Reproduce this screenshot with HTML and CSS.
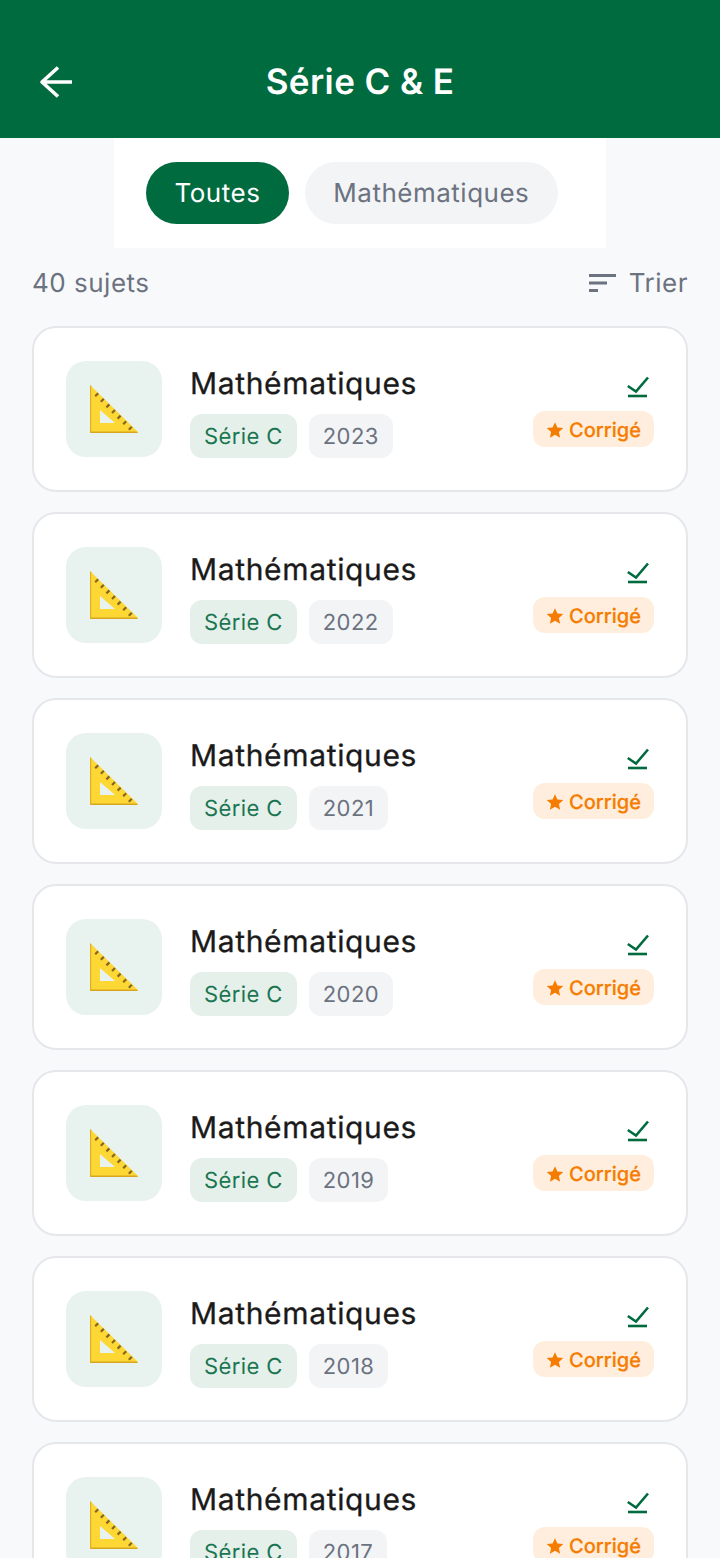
FILE: index.html
```html
<!DOCTYPE html>
<html lang="fr">
<head>
    <meta charset="UTF-8">
    <meta name="viewport" content="width=device-width, initial-scale=1.0">
    <title>Série C &amp; E</title>
    <link rel="stylesheet" href="styles.css">
</head>
<body>
    <svg class="sprites" width="0" height="0">
        <symbol id="ruler" viewBox="0 0 48 48">
            <path d="M0 0 L48 47 L48 48 L0 48 Z" fill="#fdd835"/>
            <path d="M0 46.5 H46.5 L48 48 H0 Z" fill="#d9a520"/>
            <path d="M0 0 L1.2 1.2 V48 H0 Z" fill="#e0ae22"/>
            <path d="M10 25 L25 38 H10 Z" fill="#e8f2ee"/>
            <path d="M5.2 11.2 L8.2 8.2 M10.8 16.8 L13.8 13.8 M16.4 22.4 L19.4 19.4 M22 28 L25 25 M27.6 33.6 L30.6 30.6 M33.2 39.2 L36.2 36.2 M38.8 44.8 L41.8 41.8" stroke="#86651f" stroke-width="2.2" fill="none"/>
        </symbol>
        <symbol id="done" viewBox="0 0 22 22">
            <path d="M0.8 10 L9 15.5 L21 1.5" stroke="#006b3f" stroke-width="2.6" fill="none"/>
            <path d="M1 20 H20" stroke="#006b3f" stroke-width="2.6" fill="none"/>
        </symbol>
        <symbol id="star" viewBox="0 0 24 24">
            <path d="M12 1.5 L15.2 8.6 L23 9.4 L17.2 14.6 L18.8 22.3 L12 18.4 L5.2 22.3 L6.8 14.6 L1 9.4 L8.8 8.6 Z" fill="#f57c00"/>
        </symbol>
    </svg>

    <header class="app-bar">
        <svg class="back" width="36" height="32" viewBox="0 0 36 32">
            <path d="M34 16 H4 M20 1.5 L4 16 L20 30.5" stroke="#fff" stroke-width="3.6" stroke-linejoin="round" fill="none"/>
        </svg>
        <h1>Série C &amp; E</h1>
    </header>

    <nav class="filters">
        <button class="chip chip-active">Toutes</button>
        <button class="chip">Mathématiques</button>
    </nav>

    <div class="toolbar">
        <span>40 sujets</span>
        <span class="sort">
            <svg width="27" height="18" viewBox="0 0 27 18">
                <path d="M0 1.5 H27 M0 9 H18 M0 16.5 H9" stroke="#6b7280" stroke-width="3" fill="none"/>
            </svg>
            Trier
        </span>
    </div>

    <main class="list" id="list"></main>

    <script>
        const years = [2023, 2022, 2021, 2020, 2019, 2018, 2017];
        const list = document.getElementById('list');

        years.forEach(year => {
            const card = document.createElement('article');
            card.className = 'card';
            card.innerHTML = `
                <div class="thumb"><svg width="48" height="48"><use href="#ruler"/></svg></div>
                <div class="info">
                    <h2>Mathématiques</h2>
                    <div class="tags">
                        <span class="tag tag-serie">Série C</span>
                        <span class="tag tag-year">${year}</span>
                    </div>
                </div>
                <div class="status">
                    <svg class="done" width="22" height="22"><use href="#done"/></svg>
                    <span class="badge"><svg width="18" height="18"><use href="#star"/></svg>Corrigé</span>
                </div>`;
            list.appendChild(card);
        });
    </script>
</body>
</html>
```

FILE: styles.css
```css
html, body {
    height: 1558px;
    overflow: hidden;
}

body {
    margin: 0;
    font-family: Inter, "Noto Sans", sans-serif;
    text-rendering: geometricPrecision;
    background-color: #f8f9fb;
    color: #1a1a1a;
}

.sprites {
    display: block;
    height: 0;
}

.app-bar {
    position: relative;
    height: 138px;
    background: #006b3f;
    display: flex;
    align-items: center;
    justify-content: center;
    padding-top: 26px;
    box-sizing: border-box;
}

.app-bar h1 {
    margin: 0;
    font-size: 35px;
    font-weight: 600;
    letter-spacing: 0.4px;
    color: #fff;
}

.back {
    position: absolute;
    left: 38px;
    top: 66px;
}

.filters {
    width: 492px;
    height: 110px;
    margin: 0 auto;
    background: #fff;
    box-sizing: border-box;
    padding: 24px 32px;
    display: flex;
    gap: 16px;
}

.chip {
    height: 62px;
    padding: 0 28.5px;
    border: none;
    border-radius: 31px;
    font-family: inherit;
    font-size: 26px;
    font-weight: 400;
    letter-spacing: 0.5px;
    text-rendering: geometricPrecision;
    background: #f3f4f6;
    color: #6b7280;
}

.chip-active {
    background: #006b3f;
    color: #fff;
}

.toolbar {
    display: flex;
    justify-content: space-between;
    align-items: center;
    height: 78px;
    padding: 0 32px 8px 32px;
    box-sizing: border-box;
    font-size: 26px;
    letter-spacing: 0.5px;
    color: #6b7280;
}

.sort {
    display: flex;
    align-items: center;
    gap: 13px;
}

.list {
    display: flex;
    flex-direction: column;
    gap: 20px;
    padding: 0 32px;
}

.card {
    flex: none;
    height: 166px;
    box-sizing: border-box;
    display: flex;
    align-items: center;
    padding: 0 32px;
    background: #fff;
    border: 2px solid #e5e7eb;
    border-radius: 24px;
}

.thumb {
    width: 96px;
    height: 96px;
    border-radius: 20px;
    background: #e8f2ee;
    display: flex;
    align-items: center;
    justify-content: center;
}

.info {
    flex: 1;
    margin-left: 28px;
}

.info h2 {
    margin: 0 0 6px;
    font-size: 30px;
    font-weight: 400;
    line-height: 48px;
    letter-spacing: 0.65px;
    -webkit-text-stroke: 0.3px #1a1a1a;
}

.tags {
    display: flex;
    gap: 12px;
}

.tag {
    height: 44px;
    line-height: 46px;
    padding: 0 14px;
    border-radius: 12px;
    font-size: 22px;
    letter-spacing: 0.4px;
}

.tag-serie {
    background: #e5f0eb;
    color: #1a7550;
}

.tag-year {
    background: #f3f4f6;
    color: #6b7280;
}

.status {
    display: flex;
    flex-direction: column;
    align-items: flex-end;
    gap: 13px;
    padding-top: 4px;
}

.done {
    margin-right: 5px;
}

.badge {
    display: flex;
    align-items: center;
    gap: 5px;
    height: 36px;
    padding: 2px 13px 0;
    box-sizing: border-box;
    border-radius: 12px;
    background: #ffeedd;
    color: #f57c00;
    font-size: 20px;
    font-weight: 500;
    -webkit-text-stroke: 0.2px #f57c00;
}
```
